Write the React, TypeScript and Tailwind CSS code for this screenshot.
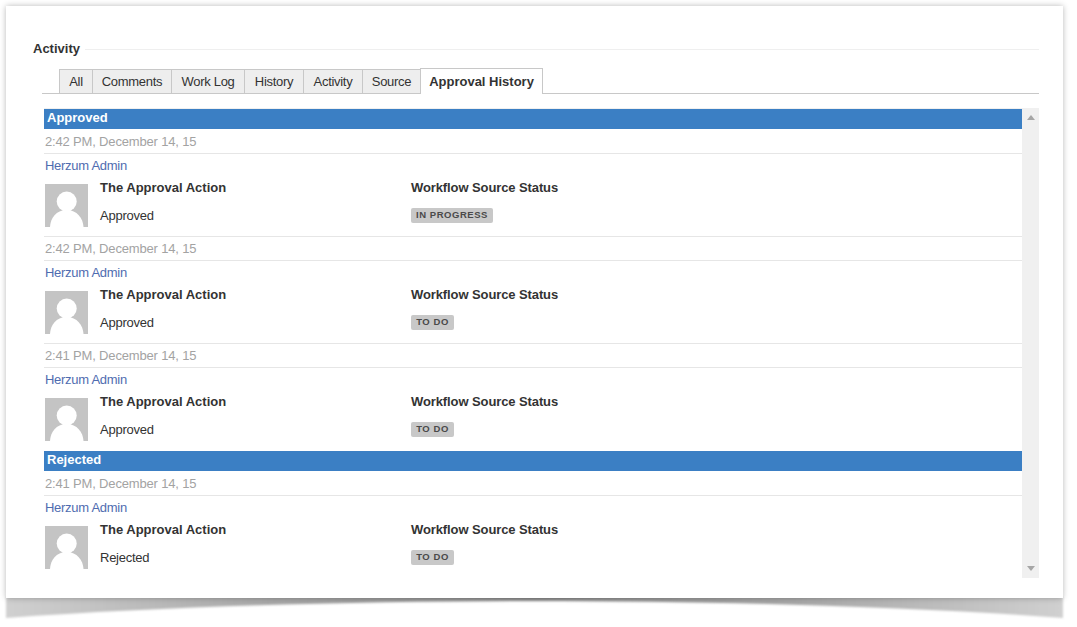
const font = "font-['Liberation_Sans',Arial,sans-serif]";

function Avatar() {
  return (
    <svg width="43" height="43" viewBox="0 0 43 43" className="shrink-0 block">
      <rect width="43" height="43" fill="#c4c4c4" />
      <circle cx="21.7" cy="17.5" r="10" fill="#ffffff" />
      <path d="M5 43 C5.5 34 11 26 21.7 26 C32 26 38 34 38.5 43 Z" fill="#ffffff" />
    </svg>
  );
}

function Entry({ time, action, status, statusW, first, last }: { time: string; action: string; status: string; statusW: string; first?: boolean; last?: boolean }) {
  return (
    <div>
      <div className={`${first ? "h-[25px] pt-[1px]" : "h-[24px]"} border-b border-[#e6e6e6] pl-[1px] flex items-center text-[13px] tracking-[-0.17px] text-[#a3a3a3]`}>{time}</div>
      <div className="h-[23px] pt-[1px] pl-[1px] flex items-center text-[13px] tracking-[-0.28px] text-[#4f6cb0]">Herzum Admin</div>
      <div className="h-[52px] pl-[1px] flex">
        <div className="pt-[7px]"><Avatar /></div>
        <div className="w-[311px] ml-[12px] shrink-0">
          <div className="h-[24px] -mt-[1px] flex items-center text-[13px] font-bold text-[#333]">The Approval Action</div>
          <div className="h-[32px] flex items-center text-[13px] tracking-[-0.25px] text-[#333]">{action}</div>
        </div>
        <div>
          <div className="h-[24px] -mt-[1px] flex items-center text-[13px] font-bold tracking-[-0.1px] text-[#333]">Workflow Source Status</div>
          <div className="h-[31px] flex items-center">
            <span className={`${statusW} h-[15px] rounded-[2px] bg-[#c8c8c8] flex items-center justify-center text-[9.5px] font-bold tracking-[0.55px] text-[#4a4a4a]`}>{status}</span>
          </div>
        </div>
      </div>
      {last ? <div className="h-[8px]" /> : <div className="h-[8px] border-b border-[#e6e6e6]" />}
    </div>
  );
}

function Bar({ label }: { label: string }) {
  return <div className="h-[20px] bg-[#3b7fc4] pl-[3px] pb-[2px] flex items-center text-[13px] font-bold text-white">{label}</div>;
}

const tabs = [
  ["All", "w-[33px]"],
  ["Comments", "w-[79px]"],
  ["Work Log", "w-[73px]"],
  ["History", "w-[59px]"],
  ["Activity", "w-[59px]"],
  ["Source", "w-[58px]"],
];

export default function App() {
  return (
    <div className={`relative w-[1077px] h-[627px] bg-white overflow-hidden ${font}`}>
      <svg className="absolute left-0 top-0" width="1077" height="627" viewBox="0 0 1077 627">
        <defs>
          <linearGradient id="sh" x1="0" x2="1" y1="0" y2="0">
            <stop offset="0" stopColor="#d0d0d0" />
            <stop offset="0.25" stopColor="#a8a8a8" />
            <stop offset="0.5" stopColor="#8a8a8a" />
            <stop offset="0.75" stopColor="#a8a8a8" />
            <stop offset="1" stopColor="#d0d0d0" />
          </linearGradient>
          <filter id="bl" x="-2%" y="-40%" width="104%" height="180%"><feGaussianBlur stdDeviation="1" /></filter>
        </defs>
        <path d="M6 596 L1063 596 L1063 618 C900 606 700 601 535 601 C370 601 170 606 6 618 Z" fill="url(#sh)" filter="url(#bl)" />
      </svg>
      <div className="absolute left-[6px] top-[6px] w-[1057px] h-[592px] bg-white shadow-[0_0_6px_rgba(0,0,0,0.28)]">
        <div className="pl-[27px] pr-[24px]">
          <div className="h-[22px] mt-[32px] flex items-center">
            <span className="text-[13px] font-bold text-[#333]">Activity</span>
            <div className="flex-1 h-[1px] bg-[#efefef] ml-[5px]" />
          </div>
          <div className="ml-[9px] mt-[8px] h-[26px] border-b border-[#c8c8c8] pl-[17px] flex items-end">
            {tabs.map(([t, w]) => (
              <div key={t} className={`${w} h-[25px] pt-[1px] -mb-[1px] bg-[#eeeeee] border-t border-l border-b border-[#c8c8c8] flex items-center justify-center text-[13px] tracking-[-0.3px] text-[#333] box-border`}>{t}</div>
            ))}
            <div className="w-[123px] h-[26px] pt-[1px] -mb-[1px] bg-white border border-b-0 border-[#c8c8c8] flex items-center justify-center text-[13px] font-bold text-[#333]">Approval History</div>
          </div>
          <div className="ml-[10px] mt-[14px] h-[470px] flex">
            <div className="w-[979px] pl-[1px] shrink-0 overflow-hidden">
              <div className="h-[1px] bg-[#f0f0f0]" />
              <Bar label="Approved" />
              <Entry first time="2:42 PM, December 14, 15" action="Approved" status="IN PROGRESS" statusW="w-[82px]" />
              <Entry time="2:42 PM, December 14, 15" action="Approved" status="TO DO" statusW="w-[43px]" />
              <Entry last time="2:41 PM, December 14, 15" action="Approved" status="TO DO" statusW="w-[43px]" />
              <Bar label="Rejected" />
              <Entry first last time="2:41 PM, December 14, 15" action="Rejected" status="TO DO" statusW="w-[43px]" />
            </div>
            <div className="flex-1 bg-[#f0f0f0] flex flex-col items-center justify-between pt-[7px] pb-[7px]">
              <svg width="8" height="5" viewBox="0 0 8 5"><path d="M4 0 L8 5 L0 5 Z" fill="#a6a6a6" /></svg>
              <svg width="8" height="5" viewBox="0 0 8 5"><path d="M0 0 L8 0 L4 5 Z" fill="#a6a6a6" /></svg>
            </div>
          </div>
        </div>
      </div>
    </div>
  );
}
